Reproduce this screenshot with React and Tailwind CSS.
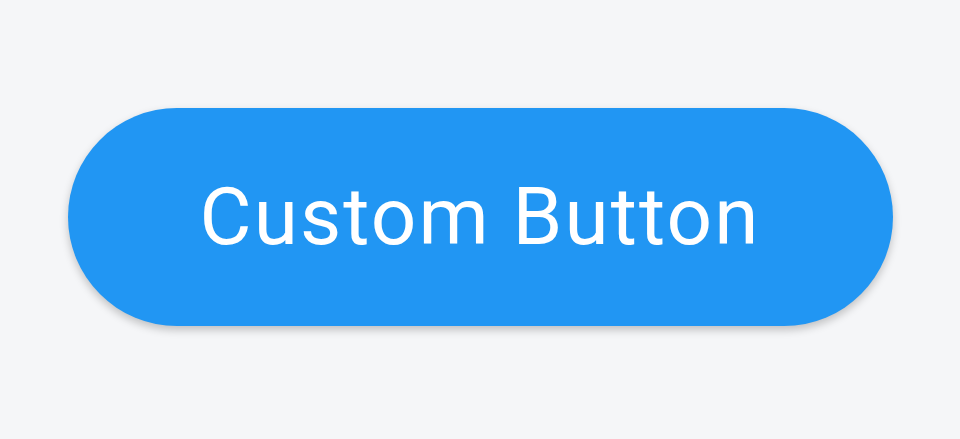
export default function App() {
    return (
        <div className="flex h-[439px] w-full items-center justify-center bg-[#f5f6f8] pb-[6px]">
            {/* Pill button */}
            <button
                type="button"
                className="flex h-[218px] w-[825px] items-center justify-center rounded-full bg-[#2196f3] text-[80px] leading-none tracking-[0.026em] text-white shadow-[0_4px_8px_rgba(0,0,0,0.22)]"
                style={{ fontFamily: "Roboto, 'Noto Sans', sans-serif" }}
            >
                Custom Button
            </button>
        </div>
    );
}
